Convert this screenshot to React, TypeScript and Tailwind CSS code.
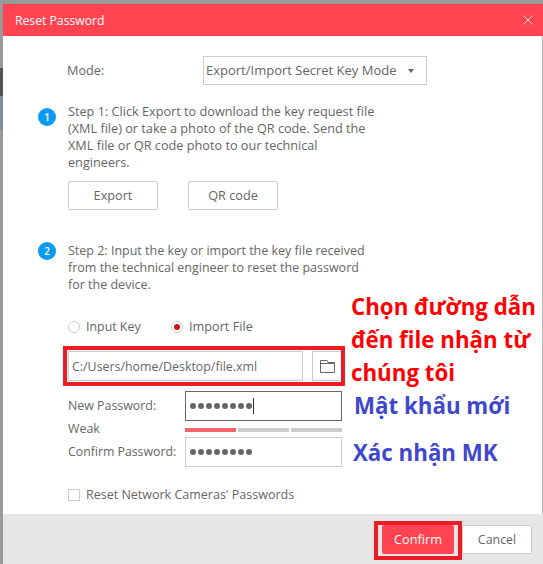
import React from "react";

const font = { fontFamily: '"Open Sans", "Noto Sans", sans-serif' };

function Dots() {
  return (
    <span className="flex gap-[2px]">
      {[0, 1, 2, 3, 4, 5, 6, 7].map((i) => (
        <span key={i} className="w-[6px] h-[6px] rounded-full bg-[#666]" />
      ))}
    </span>
  );
}

function Badge({ n }: { n: number }) {
  return (
    <span className="w-[18px] h-[18px] shrink-0 rounded-full bg-[#0d9bf2] text-white text-[10px] font-semibold flex items-center justify-center">
      {n}
    </span>
  );
}

export default function App() {
  return (
    <div className="relative w-[543px] h-[564px] overflow-hidden bg-[#999] flex flex-col pt-[4px] text-[#666] text-[12.7px] leading-[17px]" style={font}>
      <div className="flex h-[560px]">
        <div className="w-[3px] shrink-0 flex flex-col">
          <div className="h-[64px]" />
          <div className="h-[28px] bg-[#555]" />
          <div className="h-[34px] bg-[#7d8da5]" />
        </div>
        <div className="flex-1 flex flex-col min-w-0">
          <header className="h-[32px] shrink-0 bg-[#ff4350] flex items-center justify-between pl-[12px] pr-[10px] text-white">
            <span className="text-[12.2px]">Reset Password</span>
            <svg width="10" height="10" viewBox="0 0 10 10" stroke="#fff" strokeOpacity="0.8" strokeWidth="1" fill="none">
              <path d="M0.5 0.5L9.5 9.5M9.5 0.5L0.5 9.5" />
            </svg>
          </header>

          <main className="h-[478px] shrink-0 bg-white border-r border-[#bbb] pl-[65px] pt-[20px]">
            <div className="flex items-center h-[29px]">
              <span className="w-[135px] ml-[-1px] mr-[1px]">Mode:</span>
              <div className="w-[224px] h-[29px] border border-[#ccc] pl-[2px] pr-[12px] flex items-center justify-between">
                <span className="whitespace-nowrap text-[13px]">Export/Import Secret Key Mode</span>
                <span className="w-0 h-0 border-x-[3.5px] border-x-transparent border-t-[4px] border-t-[#666]" />
              </div>
            </div>

            <div className="mt-[18px] relative w-[310px]">
              <span className="absolute left-[-30px] top-[5px]"><Badge n={1} /></span>
              <p>Step 1: Click Export to download the key request file (XML file) or take a photo of the QR code. Send the XML file or QR code photo to our technical engineers.</p>
            </div>

            <div className="mt-[10px] flex gap-[30px]">
              <button className="w-[90px] h-[29px] border border-[#ccc] rounded-[2px]">Export</button>
              <button className="w-[90px] h-[29px] border border-[#ccc] rounded-[2px]">QR code</button>
            </div>

            <div className="mt-[32px] relative w-[310px]">
              <span className="absolute left-[-30px] top-[0px]"><Badge n={2} /></span>
              <p className="text-[12.5px]">Step 2: Input the key or import the key file received from the technical engineer to reset the password for the device.</p>
            </div>

            <div className="mt-[25px] flex items-center h-[17px]">
              <span className="w-[12px] h-[12px] rounded-full border border-[#ccc] mr-[6px]" />
              <span className="w-[85px] text-[12.4px]">Input Key</span>
              <span className="w-[12px] h-[12px] rounded-full border border-[#ccc] mr-[6px] flex items-center justify-center">
                <span className="w-[6px] h-[6px] rounded-full bg-[#d0101c]" />
              </span>
              <span>Import File</span>
            </div>

            <div className="mt-[16px] flex gap-[9px]">
              <div className="w-[235px] h-[30px] border border-[#ccc] pl-[3px] flex items-center text-[12.4px]">C:/Users/home/Desktop/file.xml</div>
              <div className="w-[30px] h-[30px] border border-[#ccc] flex items-center justify-center">
                <svg width="15" height="13" viewBox="0 0 15 13" fill="none" stroke="#666" strokeWidth="1">
                  <path d="M0.5 12.5V0.5H7L8 2.5H14.5V12.5ZM0.5 3.5H14.5" />
                </svg>
              </div>
            </div>

            <div className="mt-[10px] flex items-center">
              <span className="w-[117px] text-[12.4px] mt-[-2px]">New Password:</span>
              <div className="w-[157px] h-[30px] border border-[#666] pl-[4px] flex items-center">
                <Dots />
                <span className="w-px h-[16px] bg-[#333] ml-[1px]" />
              </div>
            </div>

            <div className="mt-[5px] flex items-center h-[8px]">
              <span className="w-[117px] text-[12.4px] mt-[-4px]">Weak</span>
              <div className="w-[157px] flex gap-[2px]">
                <span className="flex-1 h-[4px] bg-[#f9656d]" />
                <span className="flex-1 h-[4px] bg-[#ccc]" />
                <span className="flex-1 h-[4px] bg-[#ccc]" />
              </div>
            </div>

            <div className="mt-[3px] flex items-center">
              <span className="w-[117px] text-[12.3px] mt-[-2px]">Confirm Password:</span>
              <div className="w-[157px] h-[30px] border border-[#ccc] pl-[4px] flex items-center">
                <Dots />
              </div>
            </div>

            <div className="mt-[19px] flex items-center h-[17px]">
              <span className="w-[12px] h-[12px] border border-[#ccc] mr-[6px]" />
              <span className="text-[12.5px]">Reset Network Cameras' Passwords</span>
            </div>
          </main>

          <footer className="flex-1 bg-[#e6e6e6] flex items-start justify-end pt-[11px] pr-[11px] gap-[8px]">
            <button className="w-[72px] h-[29px] bg-[#ff4350] text-white rounded-[2px]">Confirm</button>
            <button className="w-[70px] h-[29px] bg-white border border-[#ccc] rounded-[2px] text-[12.4px]">Cancel</button>
          </footer>
        </div>
      </div>

      <div className="absolute left-[63px] top-[346px] w-[282px] h-[40px] border-[4px] border-[#ed1c24]" />
      <div className="absolute left-[374px] top-[521px] w-[88px] h-[39px] border-[4px] border-[#ed1c24]" />

      <div className="absolute left-[351px] top-[290px] w-[192px] text-[#ff0000] font-bold text-[22.3px] leading-[33px] whitespace-nowrap">
        Chọn đường dẫn<br />đến file nhận từ<br />chúng tôi
      </div>
      <div className="absolute left-[354px] top-[389px] whitespace-nowrap text-[#3f48cc] font-bold text-[22.3px] leading-[33px]">Mật khẩu mới</div>
      <div className="absolute left-[353px] top-[436px] whitespace-nowrap text-[#3f48cc] font-bold text-[22.3px] leading-[33px]">Xác nhận MK</div>
    </div>
  );
}
